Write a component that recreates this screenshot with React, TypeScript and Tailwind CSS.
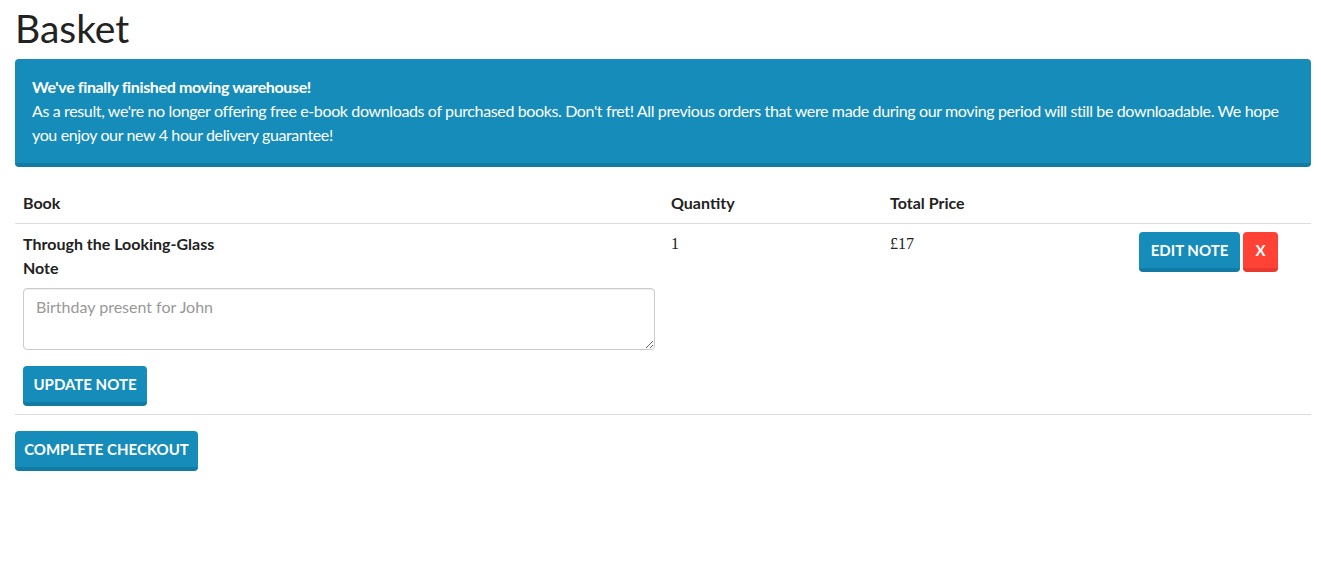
export default function App() {
    return (
        <div className="min-h-screen bg-white pl-[15px] pr-[10px] pt-[4px] text-[16px] leading-[24px] text-[#222] font-['Lato','Noto_Sans',sans-serif]">
            <h1 className="text-[39px] leading-[48px] font-normal mb-[7px]">Basket</h1>

            {/* Notice */}
            <div className="rounded-[4px] bg-[#158cba] border-b-4 border-[#127ba3] px-[17px] pt-[16px] pb-[16px] text-white mb-[16px] tracking-[-0.023em]">
                <strong className="font-bold">We've finally finished moving warehouse!</strong>
                <br />
                As a result, we're no longer offering free e-book downloads of purchased books. Don't fret! All previous orders that were made during our moving period will still be downloadable. We hope you enjoy our new 4 hour delivery guarantee!
            </div>

            {/* Basket table */}
            <table className="w-full border-collapse table-fixed">
                <colgroup>
                    <col className="w-[648px]" />
                    <col className="w-[219px]" />
                    <col className="w-[249px]" />
                    <col />
                </colgroup>
                <thead>
                    <tr className="border-b border-[#dddddd]">
                        <th className="text-left font-bold px-[8px] py-[8px]">Book</th>
                        <th className="text-left font-bold px-[8px] py-[8px]">Quantity</th>
                        <th className="text-left font-bold px-[8px] py-[8px]">Total Price</th>
                        <th className="px-[8px] py-[8px]"></th>
                    </tr>
                </thead>
                <tbody>
                    <tr className="border-b border-[#dddddd] align-top">
                        <td className="px-[8px] py-[8px]">
                            <div className="font-bold">Through the Looking-Glass</div>
                            <label className="block font-bold mb-[8px]">Note</label>
                            <textarea
                                rows={2}
                                placeholder="Birthday present for John"
                                className="block w-full h-[62px] rounded-[4px] border border-[#cccccc] shadow-[inset_0_1px_1px_rgba(0,0,0,0.075)] px-[12px] py-[6px] text-[16px] leading-[24px] placeholder:text-[#999999] outline-none"
                            ></textarea>
                            <button className="mt-[16px] h-[40px] w-[124px] rounded-[4px] bg-[#158cba] border-b-4 border-[#127ba3] text-white font-bold uppercase text-[15px]">
                                Update Note
                            </button>
                        </td>
                        <td className="px-[8px] py-[8px] font-['Liberation_Serif',serif]">1</td>
                        <td className="px-[8px] py-[8px] font-['Liberation_Serif',serif]">£17</td>
                        <td className="px-[8px] py-[8px]">
                            <div className="flex gap-[3px]">
                                <button className="h-[40px] w-[101px] rounded-[4px] bg-[#158cba] border-b-4 border-[#127ba3] text-white font-bold uppercase text-[15px]">
                                    Edit Note
                                </button>
                                <button className="h-[40px] w-[35px] rounded-[4px] bg-[#ff4136] border-b-4 border-[#e8382f] text-white font-bold uppercase text-[15px]">
                                    x
                                </button>
                            </div>
                        </td>
                    </tr>
                </tbody>
            </table>

            <button className="mt-[16px] h-[40px] w-[183px] rounded-[4px] bg-[#158cba] border-b-4 border-[#127ba3] text-white font-bold uppercase text-[15px]">
                Complete Checkout
            </button>
        </div>
    );
}
